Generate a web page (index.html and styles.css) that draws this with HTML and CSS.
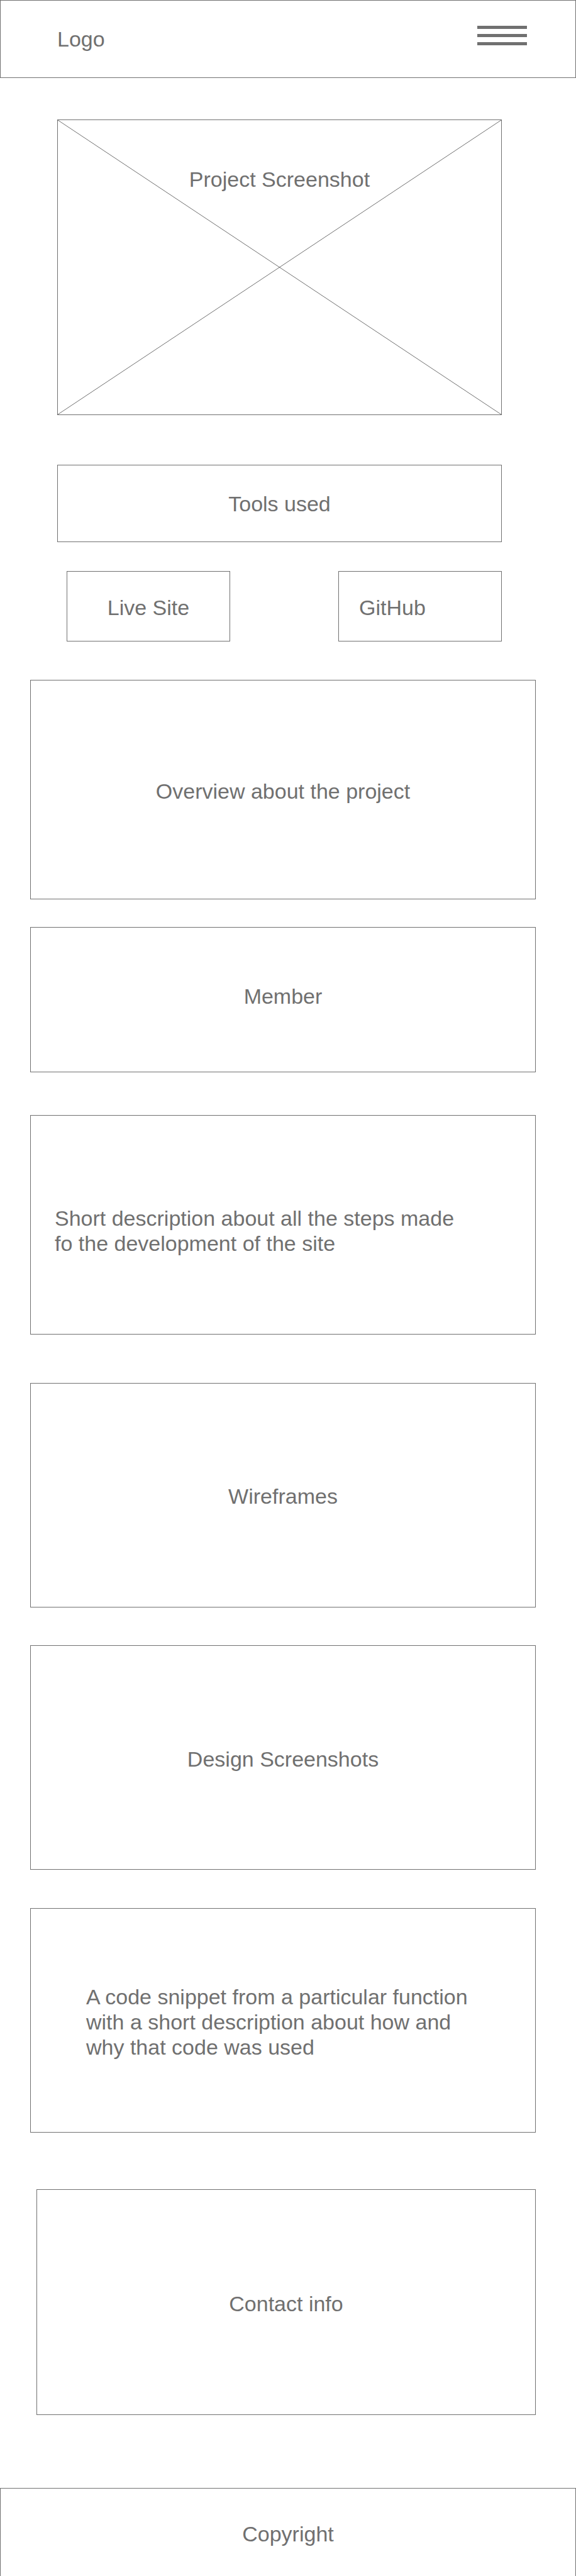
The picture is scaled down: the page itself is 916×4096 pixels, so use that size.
FILE: index.html
```html
<!DOCTYPE html>
<html lang="en">
<head>
  <meta charset="utf-8">
  <meta name="viewport" content="width=device-width, initial-scale=1">
  <title>Project</title>
  <link rel="stylesheet" href="styles.css">
</head>
<body>
  <header class="site-header">
    <a class="logo" href="#">Logo</a>
    <button class="menu-button" type="button" aria-label="Menu">
      <span class="menu-bar"></span>
      <span class="menu-bar"></span>
      <span class="menu-bar"></span>
    </button>
  </header>

  <main class="page">
    <div class="intro">
      <section class="hero">
        <svg class="hero-cross" viewBox="0 0 100 100" preserveAspectRatio="none" aria-hidden="true">
          <path d="M0 0L100 100M100 0L0 100" />
        </svg>
        <h1 class="label hero-label">Project Screenshot</h1>
      </section>
      <section class="box tools"><h2 class="label">Tools used</h2></section>
      <nav class="links">
        <a class="link-box" href="#">Live Site</a>
        <a class="link-box link-box-start" href="#">GitHub</a>
      </nav>
    </div>

    <section class="box overview"><h2 class="label">Overview about the project</h2></section>
    <section class="box member"><h2 class="label">Member</h2></section>
    <section class="box steps">
      <p class="label">Short description about all the steps made<br>fo the development of the site</p>
    </section>
    <section class="box wireframes"><h2 class="label">Wireframes</h2></section>
    <section class="box designs"><h2 class="label">Design Screenshots</h2></section>
    <section class="box snippet">
      <p class="label">A code snippet from a particular function<br>with a short description about how and<br>why that code was used</p>
    </section>
    <section class="box contact"><h2 class="label">Contact info</h2></section>
  </main>

  <footer class="site-footer">Copyright</footer>
</body>
</html>
```

FILE: styles.css
```css
:root {
  --ink: #707070;
  --line: 1px solid var(--ink);
}

* {
  box-sizing: border-box;
}

body {
  display: flex;
  flex-direction: column;
  min-height: 100vh;
  margin: 0;
  background: #fff;
  color: var(--ink);
  font: 34px/40px "Liberation Sans", Arial, sans-serif;
}

a {
  color: inherit;
  text-decoration: none;
}

.label {
  margin: 0;
  font: inherit;
}

.site-header {
  display: flex;
  align-items: flex-start;
  justify-content: space-between;
  padding: 40px 77px 41px 90px;
  border: var(--line);
}

.logo {
  padding-top: 1px;
}

.menu-button {
  display: flex;
  flex-direction: column;
  gap: 8px;
  width: 79px;
  padding: 0;
  border: 0;
  background: none;
  cursor: pointer;
}

.menu-bar {
  height: 5px;
  background: var(--ink);
}

.page {
  padding: 66px 64px 0 48px;
}

.intro {
  padding: 0 54px 0 43px;
}

.hero {
  position: relative;
  padding: 74px 0 354px;
  border: var(--line);
  text-align: center;
}

.hero-cross {
  position: absolute;
  inset: 0;
  width: 100%;
  height: 100%;
}

.hero-cross path {
  fill: none;
  stroke: var(--ink);
  stroke-width: 1px;
  vector-effect: non-scaling-stroke;
}

.hero-label {
  position: relative;
}

.box {
  border: var(--line);
  text-align: center;
}

.tools {
  margin-top: 79px;
  padding: 41px 0 40px;
}

.links {
  display: flex;
  justify-content: space-between;
  margin-top: 46px;
  padding-left: 15px;
}

.link-box {
  width: 260px;
  padding: 37px 32px 33px;
  border: var(--line);
  text-align: center;
}

.link-box-start {
  text-align: left;
}

.overview {
  margin-top: 61px;
  padding: 156px 0 151px;
}

.member {
  margin-top: 44px;
  padding: 89px 0 100px;
}

.steps {
  margin-top: 68px;
  padding: 143px 38px 124px;
  text-align: left;
}

.wireframes {
  margin-top: 77px;
  padding: 159px 0 156px;
}

.designs {
  margin-top: 60px;
  padding: 160px 0 155px;
}

.snippet {
  margin-top: 61px;
  padding: 120px 0 115px 88px;
  text-align: left;
}

.contact {
  margin: 90px 0 0 10px;
  padding: 161px 0 156px;
}

.site-footer {
  flex: 1;
  margin-top: 116px;
  padding: 52px 0 46px;
  border: var(--line);
  border-bottom: 0;
  text-align: center;
}
```
